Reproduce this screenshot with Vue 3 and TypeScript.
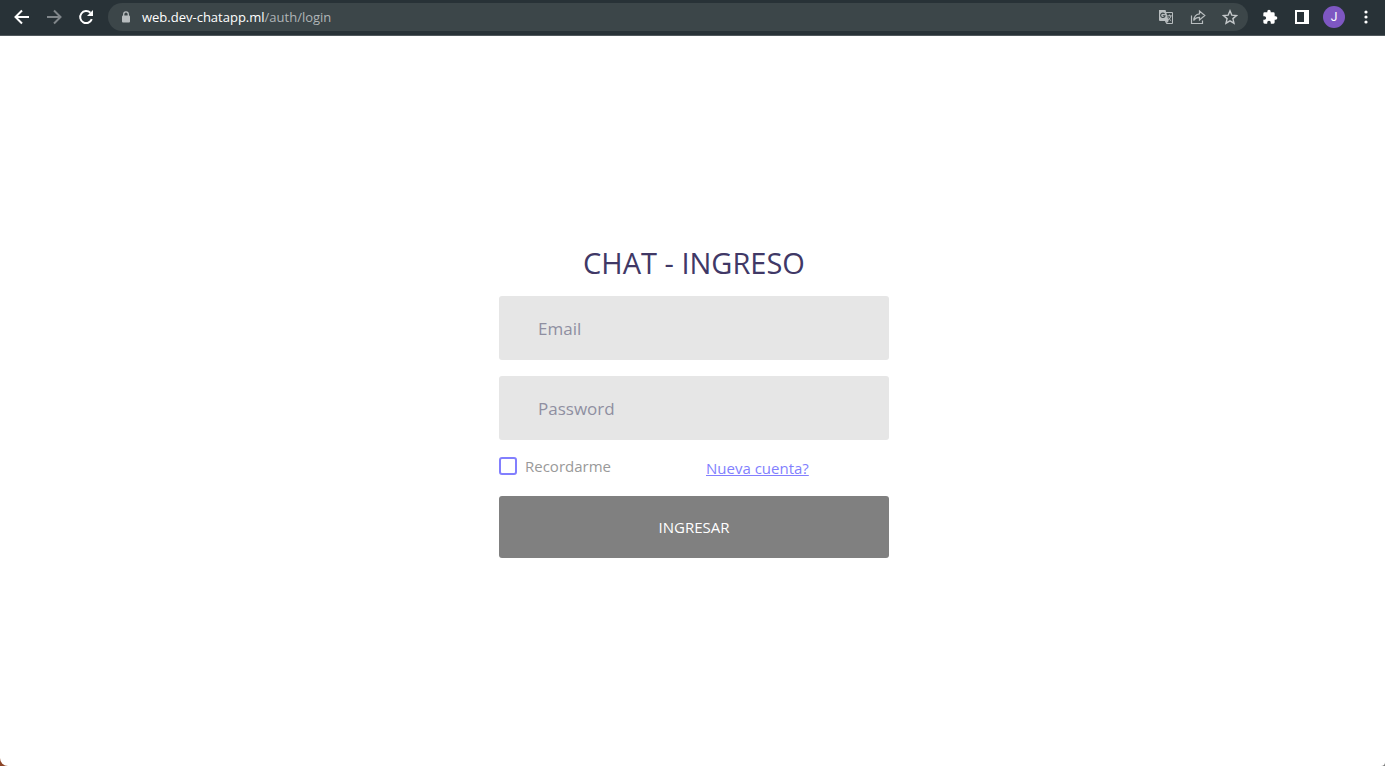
<script setup lang="ts">
import { ref } from 'vue'

const email = ref<string>('')
const password = ref<string>('')
const remember = ref<boolean>(false)
</script>

<template>
  <div class="window">
    <header class="toolbar">
      <nav class="nav" aria-label="Navigation">
        <button class="tool" type="button" aria-label="Back">
          <svg viewBox="0 0 16 16" fill="none" stroke="#fff" stroke-width="2"><path d="M15 8H2M8 1.5 1.5 8 8 14.5" /></svg>
        </button>
        <button class="tool" type="button" aria-label="Forward">
          <svg viewBox="0 0 16 16" fill="none" stroke="#80868a" stroke-width="2"><path d="M1 8h13M8 1.5 14.5 8 8 14.5" /></svg>
        </button>
        <button class="tool" type="button" aria-label="Reload">
          <svg viewBox="0 0 16 16"><path d="M13.8 10.2A6 6 0 1 1 12.4 3.8" fill="none" stroke="#fff" stroke-width="2" /><path d="M15 1v6H9z" fill="#fff" /></svg>
        </button>
      </nav>
      <div class="address">
        <svg class="lock" viewBox="0 0 10 12"><path d="M2.7 5V3.2a2.3 2.3 0 0 1 4.6 0V5" fill="none" stroke="#b8bdbf" stroke-width="1.3" /><rect x="1" y="4.5" width="8" height="7" rx="1" fill="#b8bdbf" /></svg>
        <span class="url"><span class="host">web.dev-chatapp.ml</span>/auth/login</span>
        <button class="tool" type="button" aria-label="Translate">
          <svg viewBox="0 0 16 16">
            <path d="M7 3.5h7.5v11H8.5L7 11" fill="none" stroke="#b8bdbf" />
            <path d="M1 1h6.5l3.2 11H2a1 1 0 0 1-1-1z" fill="#b8bdbf" />
            <path d="M6.6 5A2.2 2.2 0 1 0 7 6.8H4.8" fill="none" stroke="#3c4649" stroke-width="1.1" />
            <path d="M9.3 6.8h4.4M11.5 5.6v1.2M13 6.8q-.6 2.6-2.8 4.2M10.5 8.5q.8 2 2.7 3.3" fill="none" stroke="#b8bdbf" />
            <path d="m8 12 .5 2.5 2.2-2.5z" fill="#b8bdbf" />
          </svg>
        </button>
        <button class="tool" type="button" aria-label="Share">
          <svg viewBox="0 0 16 16" fill="none" stroke="#b8bdbf" stroke-width="1.2"><path d="M1.5 6.5v8h11v-3" /><path d="M9.5 2v2.8C6 5.2 4 7.5 3.7 11.5 5 9.3 7 8.3 9.5 8.3V11l5.3-4.5z" /></svg>
        </button>
        <button class="tool" type="button" aria-label="Bookmark">
          <svg viewBox="0 0 16 16" fill="none" stroke="#c3c7c9" stroke-width="1.4"><path d="m8 1.8 1.8 4.3 4.7.4-3.6 3.1 1.1 4.6L8 11.8l-4 2.4 1.1-4.6L1.5 6.5l4.7-.4z" /></svg>
        </button>
      </div>
      <div class="actions">
        <button class="tool" type="button" aria-label="Extensions">
          <svg viewBox="0 0 24 24" fill="#fff"><path d="M20.5 11H19V7a2 2 0 0 0-2-2h-4V3.5a2.5 2.5 0 0 0-5 0V5H4a2 2 0 0 0-2 2v3.8h1.5a2.7 2.7 0 0 1 0 5.4H2V20a2 2 0 0 0 2 2h3.8v-1.5a2.7 2.7 0 0 1 5.4 0V22H17a2 2 0 0 0 2-2v-4h1.5a2.5 2.5 0 0 0 0-5z" /></svg>
        </button>
        <button class="tool" type="button" aria-label="Side panel">
          <svg viewBox="0 0 16 16"><path fill="#fff" fill-rule="evenodd" d="M1 1h14v14H1zM3 3v10h7V3z" /></svg>
        </button>
        <button class="avatar" type="button" aria-label="Profile">J</button>
        <button class="tool" type="button" aria-label="Menu">
          <svg viewBox="0 0 16 16" fill="#fff"><circle cx="8" cy="3" r="1.6" /><circle cx="8" cy="8" r="1.6" /><circle cx="8" cy="13" r="1.6" /></svg>
        </button>
      </div>
    </header>

    <main class="page">
      <form class="login" @submit.prevent>
        <h1 class="title">CHAT - INGRESO</h1>
        <input v-model="email" class="field" type="email" placeholder="Email" aria-label="Email">
        <input v-model="password" class="field" type="password" placeholder="Password" aria-label="Password">
        <div class="options">
          <label class="remember"><input v-model="remember" class="check" type="checkbox">Recordarme</label>
          <a class="register" href="#register">Nueva cuenta?</a>
        </div>
        <button class="submit" type="submit">INGRESAR</button>
      </form>
    </main>
  </div>
</template>

<style>
body {
  margin: 0;
  background: linear-gradient(90deg, #8c4426 50%, #777 50%);
}
</style>

<style scoped>
.window {
  display: flex;
  flex-direction: column;
  min-height: 100vh;
  overflow: hidden;
  border-radius: 0 0 4px 8px;
  background: #fff;
  font-family: "Segoe UI", "Open Sans", "Noto Sans", sans-serif;
}
button {
  padding: 0;
  border: 0;
  background: none;
  font-family: inherit;
  cursor: pointer;
}
.toolbar {
  display: flex;
  align-items: center;
  box-sizing: border-box;
  height: 36px;
  padding: 0 11px 2px 14px;
  border-bottom: 1px solid #50585c;
  background: #283237;
}
.nav {
  display: flex;
  gap: 16px;
}
.tool {
  display: flex;
  flex: none;
  width: 16px;
  height: 16px;
}
.tool svg {
  width: 16px;
  height: 16px;
}
.address {
  display: flex;
  flex: 1;
  align-items: center;
  gap: 16px;
  height: 28px;
  margin: 0 14px;
  padding: 0 10px 0 13px;
  border-radius: 14px;
  background: #3c4649;
}
.lock {
  width: 10px;
  height: 12px;
  margin-right: -5px;
}
.url {
  flex: 1;
  color: #b0b5b7;
  font-size: 13px;
  line-height: 18px;
}
.host {
  color: #fff;
}
.actions {
  display: flex;
  align-items: center;
  gap: 13px;
}
.actions .tool:first-child {
  margin-right: 3px;
}
.avatar {
  width: 22px;
  height: 22px;
  border-radius: 50%;
  background: #7e57c2;
  color: #fff;
  font-family: Roboto, sans-serif;
  font-size: 12px;
  line-height: 22px;
}
.page {
  display: flex;
  flex: 1;
  align-items: center;
  justify-content: center;
  padding: 1px 0 0 3px;
}
.login {
  width: 390px;
  max-width: 100%;
}
.title {
  margin: 0 0 15px;
  color: #403866;
  font-size: 29px;
  font-weight: 400;
  line-height: 36px;
  text-align: center;
}
.field {
  display: block;
  box-sizing: border-box;
  width: 100%;
  height: 64px;
  margin-bottom: 16px;
  padding: 0 39px;
  border: 0;
  border-radius: 3px;
  background: #e6e6e6;
  color: #403866;
  font-family: inherit;
  font-size: 17px;
}
.field::placeholder {
  color: #8f8fa1;
  opacity: 1;
}
.options {
  display: grid;
  grid-template-columns: 207px 1fr;
  align-items: start;
  height: 40px;
  font-size: 15px;
  line-height: 20px;
}
.remember {
  display: flex;
  align-items: center;
  gap: 8px;
  color: #999;
}
.check {
  appearance: none;
  box-sizing: border-box;
  width: 18px;
  height: 18px;
  margin: 0;
  border: 2px solid #827ffe;
  border-radius: 3px;
  background: #fff;
}
.check:checked {
  background: #827ffe;
}
.register {
  padding-top: 2px;
  color: #827ffe;
}
.submit {
  display: block;
  width: 100%;
  height: 62px;
  border-radius: 3px;
  background: #808080;
  color: #fff;
  font-size: 15px;
}
</style>
